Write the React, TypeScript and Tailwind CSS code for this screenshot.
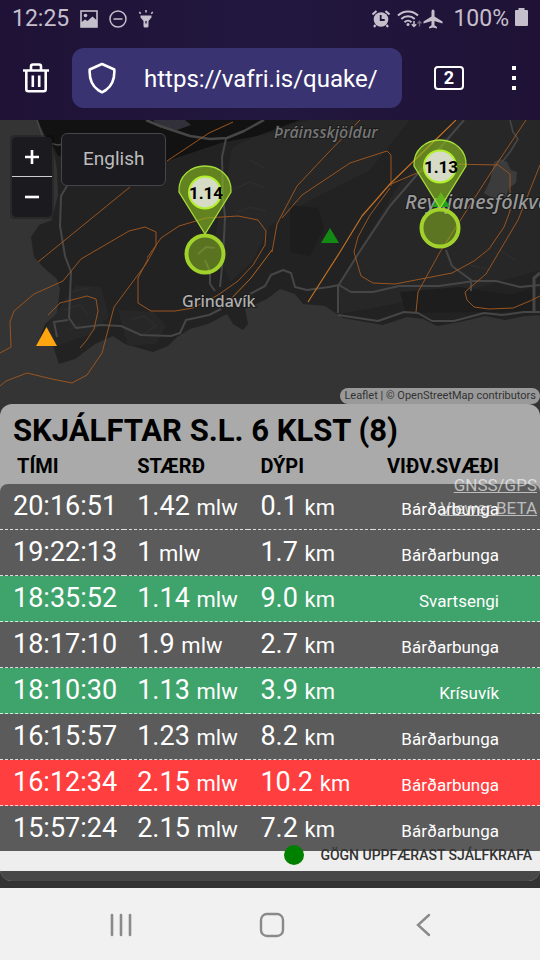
import React from 'react';

type Level = 'normal' | 'green' | 'red';

interface Quake {
  time: string;
  size: string;
  depth: string;
  area: string;
  level: Level;
}

const quakes: Quake[] = [
  { time: '20:16:51', size: '1.42', depth: '0.1', area: 'Bárðarbunga', level: 'normal' },
  { time: '19:22:13', size: '1', depth: '1.7', area: 'Bárðarbunga', level: 'normal' },
  { time: '18:35:52', size: '1.14', depth: '9.0', area: 'Svartsengi', level: 'green' },
  { time: '18:17:10', size: '1.9', depth: '2.7', area: 'Bárðarbunga', level: 'normal' },
  { time: '18:10:30', size: '1.13', depth: '3.9', area: 'Krísuvík', level: 'green' },
  { time: '16:15:57', size: '1.23', depth: '8.2', area: 'Bárðarbunga', level: 'normal' },
  { time: '16:12:34', size: '2.15', depth: '10.2', area: 'Bárðarbunga', level: 'red' },
  { time: '15:57:24', size: '2.15', depth: '7.2', area: 'Bárðarbunga', level: 'normal' },
];

const levelClass: Record<Level, string> = {
  normal: 'bg-[#5b5b5b]',
  green: 'bg-[#3fa36c]',
  red: 'bg-[#ff3f3f]',
};

const StatusBar: React.FC = () => (
  <div className="flex h-9 items-center justify-between px-3 pt-0.5 text-[#c5bfcc]">
    <div className="flex items-center gap-[11px]">
      <span className="text-[23px] leading-8">12:25</span>
      <svg width="18" height="18" viewBox="0 0 18 18" fill="none" stroke="currentColor" strokeWidth="1.6">
        <rect x="1" y="1" width="16" height="16" />
        <circle cx="5.5" cy="5.5" r="1.8" fill="currentColor" stroke="none" />
        <path d="M1 12.5l4-3 2.5 1.5L12.5 6.500 17 10.500V17H1z" fill="currentColor" stroke="none" />
      </svg>
      <svg width="18" height="18" viewBox="0 0 18 18" fill="none" stroke="currentColor" strokeWidth="1.5">
        <circle cx="9" cy="9" r="8" />
        <path d="M4.500 9h9" />
      </svg>
      <svg width="16" height="18" viewBox="0 0 16 18" fill="currentColor">
        <path d="M2.500 5.500h11v2l-3 3.500V16a1.500 1.500 0 0 1-1.500 1.500H7A1.500 1.500 0 0 1 5.500 16v-5l-3-3.500z" />
        <path d="M8 0v2.500M1.300 2l1.400 1.800M14.700 2l-1.400 1.800" stroke="currentColor" strokeWidth="1.500" />
        <path d="M8 11v2.500" stroke="#21153b" strokeWidth="1.300" />
      </svg>
    </div>
    <div className="flex items-center">
      <svg width="20" height="20" viewBox="0 0 20 20" fill="currentColor">
        <circle cx="10" cy="10.500" r="7.300" />
        <path d="M1.500 5.500L5.500 2M18.500 5.500L14.500 2M4.500 16l-1.500 2M15.500 16l1.500 2" stroke="currentColor" strokeWidth="2.200" />
        <path d="M9.700 6v5h4" fill="none" stroke="#21153b" strokeWidth="1.800" />
      </svg>
      <svg className="ml-1.5" width="26" height="20" viewBox="0 0 26 20" fill="none" stroke="currentColor" strokeWidth="2">
        <path d="M1 6.500c5.500-5.500 14.500-5.500 20 0M4.300 10c3.700-3.700 9.700-3.700 13.400 0M7.500 13.200c2-2 5-2 7 0" />
        <circle cx="11" cy="15.500" r="1.500" fill="currentColor" stroke="none" />
        <path d="M17 12v5M14.800 15.200l2.200 2.300 2.200-2.300" strokeWidth="1.500" />
        <path d="M22.500 17.500v-5M20.500 14.500l2-2.200 2 2.200" strokeWidth="1.300" opacity=".45" />
      </svg>
      <svg width="20" height="20" viewBox="0 0 20 20" fill="currentColor">
        <path d="M10 0.500c1 0 1.500 1 1.500 2V7.500l8 5v2l-8-2.500v4.200l2.500 1.800v1.500L10 18.500l-4 1V18l2.500-1.800V12l-8 2.500v-2l8-5V2.500c0-1 .5-2 1.500-2z" />
      </svg>
      <span className="ml-2.5 text-[23px] leading-8">100%</span>
      <svg className="-mt-1 ml-1.5" width="13" height="18" viewBox="0 0 13 18" fill="currentColor">
        <path d="M3.500 0h6v2H12a1 1 0 0 1 1 1v14a1 1 0 0 1-1 1H1a1 1 0 0 1-1-1V3a1 1 0 0 1 1-1h2.500z" />
      </svg>
    </div>
  </div>
);

const BrowserBar: React.FC = () => (
  <div className="flex h-21 items-center pl-5 pr-3 text-white">
    <button aria-label="Delete session">
      <svg width="32" height="32" viewBox="0 0 32 32" fill="none" stroke="currentColor" strokeWidth="2.600">
        <path d="M3 8.500h26M6.300 8.500v18.700a2 2 0 0 0 2 2h15.400a2 2 0 0 0 2-2V8.500M11 8.500V4.500A2 2 0 0 1 13 2.500h6A2 2 0 0 1 21 4.500v4" />
        <path d="M12.800 13.500v11.500M19.200 13.500v11.500" />
      </svg>
    </button>
    <div className="ml-5 flex h-15 min-w-0 flex-1 items-center rounded-xl bg-[#3a3371] pl-4">
      <svg className="shrink-0" width="28" height="32" viewBox="0 0 28 32" fill="none" stroke="currentColor" strokeWidth="2.600" strokeLinejoin="round">
        <path d="M14 2L26.300 7.500C26.800 16 24 23.500 18 28l-4 2.300L10 28C4 23.500 1.200 16 1.700 7.500z" />
      </svg>
      <input
        aria-label="Address"
        className="ml-7 w-full min-w-0 bg-transparent pt-0.5 text-2xl outline-none"
        defaultValue="https://vafri.is/quake/"
      />
    </div>
    <button
      aria-label="Tabs"
      className="ml-8 flex h-6 w-[30px] items-center justify-center rounded-sm border-2 border-white text-lg font-bold leading-5"
    >
      2
    </button>
    <button aria-label="Menu" className="ml-9 flex h-10 w-7 flex-col items-center justify-center gap-1.5">
      <span className="size-1 bg-white" />
      <span className="size-1 bg-white" />
      <span className="size-1 bg-white" />
    </button>
  </div>
);

interface MarkerProps {
  x: number;
  y: number;
  label: string;
}

// x / y is the tip of the pin, the ring sits right below it
const Marker: React.FC<MarkerProps> = ({ x, y, label }) => (
  <g transform={`translate(${x} ${y})`}>
    <circle cx="0" cy="20" r="18.500" fill="#8fc31f" fillOpacity=".5" stroke="#a0d22b" strokeWidth="4" />
    <path d="M0 0L-26-42c-1-16 12-26 26-26s27 10 26 26z" fill="#8fc31f" fillOpacity=".6" stroke="#a5dc3a" strokeWidth="1.300" />
    <circle cx="0" cy="-41.500" r="16" fill="#d5dbc5" stroke="#b2f02c" strokeWidth="2" />
    <text x="1" y="-35" textAnchor="middle" fontSize="17" fontWeight="700" fill="#000">
      {label}
    </text>
  </g>
);

const QuakeMap: React.FC = () => (
  <div className="relative h-71 overflow-hidden bg-[#343434]">
    <svg className="h-full w-full" viewBox="0 0 540 284" preserveAspectRatio="xMidYMin slice" fill="none">
      <path
        fill="#222"
        d="M37 0l7 14 9 12 4 24 1 25-6 25-13 5-8 12 3 20 9 10 14 12 3 10-3 25-12 10-5 13 13 9 6 18 16-5 20-15 18-8 12 8 28 8 15-6 9-9 13-8 18-5 19-10 6 10 10 6 5-6-3-15 22-10 13-10 15 5 8 10 22 2 18 12 40 7 24-8 16 2 14 7 23-4 25-6 20 4 20-4 20-1V0z"
      />
      <path fill="#121212" d="M38 0l6 14 9 12 5 10 100 8 66-22 44-8 40-14z" />
      <path fill="#323039" d="M153 0h32l6 5-14 5-18-3z" />
      <g fill="#292929" fillOpacity=".7">
        <path d="M232 28l14-8 54-20h110l-40 50-60 30-40 26-18 36-22 20-16-40z" />
        <path d="M340 194l-2-28 60-100 60-66h82v150l-70 20z" />
        <path d="M76 165l25 2 8 30-20 18-36 12-10-15z" />
        <path d="M118 190l36 2 12 14-10 18-28 2z" />
      </g>
      <path fill="#1d1d1d" d="M290 85l28 3 6 20-14 28-20-4zM400 172l60-5 50 8 26-8v24l-130 2z" />
      <path fill="#3c3c3c" d="M494 42l6-3 7 3 4 8 6 2-1 11-7 5-3 9-12 2-10-6 6-12z" />

      {/* lava textures */}
      <g stroke="#2c2c2c" strokeWidth="2">
        <path d="M232 70l18-8 14 6M238 92l12-5 16 4M250 40l14 8M130 200l14-4 12 10-16 10M70 172l20-4M64 190l16-5 8 10M70 210l10-6M500 130l15 10M470 145l20 5" />
      </g>

      {/* roads and coast line */}
      <g stroke="#464646" strokeWidth="2" strokeLinejoin="round">
        <path d="M37 0l4 12 3 10 14 3 10-2" strokeWidth="1.500" />
        <path d="M146 0l14 6 30 10 20 3 17-1 17-7 20-11" strokeWidth="2.500" />
        <path d="M226 19l-4 18 1 40 2 20-2 40-3 30" />
        <path d="M67 66l-6 10-1 30 5 30 6 16-2 46 7 10 25-3 20 1 20 9 30 1 9-3 6-13 23-5 12-6" />
        <path d="M68 200l-14 2 3 15M198 134l8-7 9 1M205 140l5 12v12l5 7" />
        <path d="M250 174l15-8 6-11 12-5 8 3 4 14 12 3 22-3 10-2 12 7h22l26-6h40l35-5h22l24 6 30-3 35-9" />
        <path d="M338 193V166l22-35 30-45 74-86" />
        <path d="M446 130l6 16 19 14v11" />
        <path d="M510 0l3 12 5 7-8 13-8 10" strokeWidth="1.600" />
        <path d="M534 192v-34l6-5" strokeWidth="3" />
        <path d="M338 195l20 3 20 3 26-9 14 1 14 8h22l30-8 18 2 22-3h22" />
      </g>

      {/* fissure swarms */}
      <g stroke="#9a551f" strokeWidth="1" strokeLinejoin="round">
        <path d="M38 142L130 67M167 41l42-28 24-11" />
        <path d="M38 281" />
        <path d="M81 139l48-28 16-4 11 5v14l-10 18-32 43-12 46-15 22-15 8-20-4-25-6-21 8-6 5" />
        <path d="M81 139l-18 22-29 13-20 17-4 11 1 25-11 6" />
        <path d="M48 195l12-12 27-7 9 3 2 12-4 18-8 12-6 7" />
        <path d="M147 138l14-20 18-12 27-8 32-2 20 4 8 11-1 14-12 20-15 16-20 14-25 13-18 3h-24l-13-8v-25l10-19" />
        <path d="M272 132l5-28 20-38 30-32 33-34" />
        <path d="M282 98l20-23 48-32 37-12 4 4v31" />
        <path d="M308 182l32-50 22-36 28-32L456 0" stroke="#c26f24" strokeWidth="1.200" />
        <path d="M226 184l25-26 21-28" stroke="#b5661f" />
        <path d="M391 64l26-11 34-9 47 1 12 9v37l-6 16-15 22-15 12-22 12-57 11-22-1-12-7-7-24 4-15 12-22 20-27" />
        <path d="M526 0l-36 54-50 78-22 40-2 20" />
        <path d="M540 45l-22 55-32 54-21 18 2 8 7 7 15 2 24-1 17-7 10-5" />
      </g>

      <g fontFamily="'Noto Sans', sans-serif" fontWeight="500" stroke="#1c1c1c" strokeWidth="2" paintOrder="stroke">
        <text x="274" y="18" fontSize="16" fontStyle="italic" fill="#777">Þráinsskjöldur</text>
        <text x="405" y="89" fontSize="20" fontStyle="italic" fill="#999">Reykjanesfólkvangur</text>
        <text x="182" y="187" fontSize="16" fill="#b0b0b0">Grindavík</text>
      </g>

      <path d="M46.500 207l10.500 19H36z" fill="#ffa50f" />
      <path d="M330 108l9 15h-18z" fill="#138a13" />
      <path d="M441 72l9 15h-18z" fill="#1fa01f" />

      <g fontFamily="Roboto, sans-serif">
        <Marker x={205} y={114} label="1.14" />
        <Marker x={440} y={88} label="1.13" />
      </g>
    </svg>

    <div className="absolute left-2.5 top-[15px] flex w-11 flex-col rounded-sm border-2 border-black/20">
      <button aria-label="Zoom in" className="flex h-10 items-center justify-center rounded-t-sm border-b border-[#ccc] bg-[#1b1a1f]">
        <svg width="14" height="14" viewBox="0 0 14 14" stroke="#fff" strokeWidth="2.600">
          <path d="M0 7h14M7 0v14" />
        </svg>
      </button>
      <button aria-label="Zoom out" className="flex h-10 items-center justify-center rounded-b-sm bg-[#1b1a1f]">
        <svg width="14" height="14" viewBox="0 0 14 14" stroke="#fff" strokeWidth="2.600">
          <path d="M0 7h14" />
        </svg>
      </button>
    </div>
    <button className="absolute left-[61px] top-[13px] h-[53px] rounded-md border border-[#45444a] bg-[#1b1a1f] px-[21px] text-[19px] text-[#bdbdbd]">
      English
    </button>
    <div className="absolute bottom-0 right-0 h-4 rounded-full bg-[#999] px-1 text-[11px] leading-4 text-[#333]">
      <a href="#leaflet">Leaflet</a> | © <a href="#osm">OpenStreetMap</a> contributors
    </div>
  </div>
);

const QuakeTable: React.FC = () => (
  <table className="w-full table-fixed border-separate border-spacing-0 text-left">
    <colgroup>
      <col className="w-[23%]" />
      <col className="w-[23%]" />
      <col className="w-[23%]" />
      <col />
    </colgroup>
    <thead>
      <tr className="text-xl leading-6 text-black">
        <th className="pb-1.5 pl-[17px] pt-0.5 font-bold">TÍMI</th>
        <th className="pb-1.5 pl-[13px] pt-0.5 font-bold">STÆRÐ</th>
        <th className="pb-1.5 pl-3 pt-0.5 font-bold">DÝPI</th>
        <th className="pb-1.5 pr-[41px] pt-0.5 text-right font-bold">VIÐV.SVÆÐI</th>
      </tr>
    </thead>
    <tbody className="whitespace-nowrap text-[27px] leading-[45px] text-white [&>tr:first-child>td:first-child]:rounded-tl-lg [&>tr:first-child>td:last-child]:rounded-tr-lg [&>tr:last-child>td]:border-b-0">
      {quakes.map((q) => (
        <tr key={q.time}>
          <td className={`border-b border-dashed border-white/80 p-0 pl-[13px] align-baseline ${levelClass[q.level]}`}>{q.time}</td>
          <td className={`border-b border-dashed border-white/80 p-0 pl-[13px] align-baseline ${levelClass[q.level]}`}>
            {q.size} <span className="text-[22px] leading-6">mlw</span>
          </td>
          <td className={`border-b border-dashed border-white/80 p-0 pl-3 align-baseline ${levelClass[q.level]}`}>
            {q.depth} <span className="text-[22px] leading-6">km</span>
          </td>
          <td className={`border-b border-dashed border-white/80 p-0 pr-[41px] text-right align-baseline text-[17px] leading-6 ${levelClass[q.level]}`}>
            {q.area}
          </td>
        </tr>
      ))}
    </tbody>
  </table>
);

const NavigationBar: React.FC = () => (
  <nav className="flex h-18 items-center justify-around bg-[#f1f1f1] pl-[46px] pr-[42px] pt-0.5 text-[#8a8a8a]">
    <button aria-label="Recent apps">
      <svg width="24" height="24" viewBox="0 0 24 24" stroke="currentColor" strokeWidth="2.600" strokeLinecap="round">
        <path d="M3 2v20M12 2v20M21 2v20" />
      </svg>
    </button>
    <button aria-label="Home">
      <svg width="26" height="26" viewBox="0 0 26 26" fill="none" stroke="currentColor" strokeWidth="2.400">
        <rect x="2" y="2" width="22" height="22" rx="6" />
      </svg>
    </button>
    <button aria-label="Back">
      <svg width="24" height="24" viewBox="0 0 24 24" fill="none" stroke="currentColor" strokeWidth="2.400" strokeLinecap="round">
        <path d="M18 2L7 12l11 10" />
      </svg>
    </button>
  </nav>
);

const App: React.FC = () => {
  return (
    <div className="flex min-h-screen flex-col bg-[#333] font-['Roboto',sans-serif]">
      <header className="bg-linear-to-r from-[#1f1236] via-[#22173f] to-[#1f1236]">
        <StatusBar />
        <BrowserBar />
      </header>
      <main>
        <QuakeMap />
        <section className="relative overflow-hidden rounded-xl bg-[#aaa]">
          <h1 className="h-12 pl-[13px] pt-[7px] text-[31px] font-bold leading-10 text-black">SKJÁLFTAR S.L. 6 KLST (8)</h1>
          <QuakeTable />
          <a href="#gnss" className="absolute right-[3px] top-[70px] w-28 text-right text-[17px] leading-[23px] text-white/60 underline">
            GNSS/GPS Viewer BETA
          </a>
          <div className="flex h-5 items-center justify-end gap-4 bg-[#eee] pr-2 text-sm font-medium leading-5 text-[#333]">
            <span className="-mt-3 size-5 rounded-full bg-[#008000]" />
            <span className="-mt-3">GÖGN UPPFÆRAST SJÁLFKRAFA</span>
          </div>
          <div className="h-2.5 bg-[#484848]" />
        </section>
      </main>
      <div className="mt-auto">
        <NavigationBar />
      </div>
    </div>
  );
};

export default App;
